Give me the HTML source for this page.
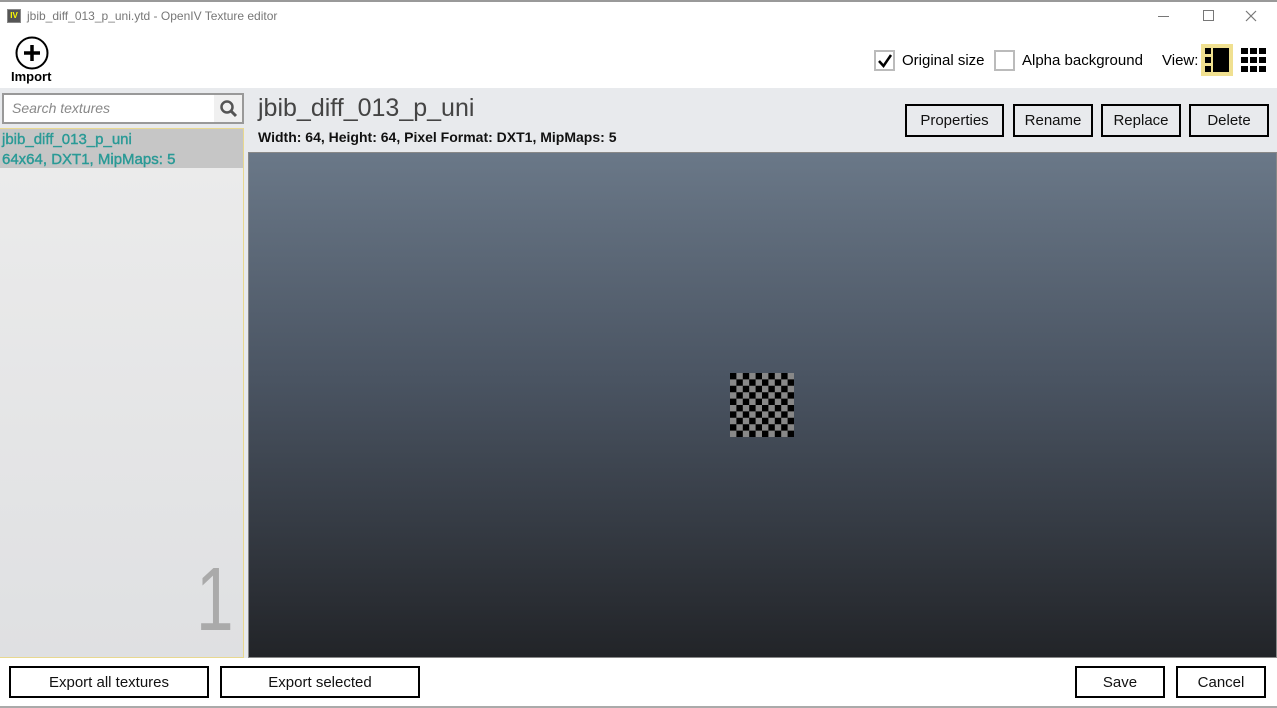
<!DOCTYPE html>
<html><head><style>
*{margin:0;padding:0;box-sizing:border-box}
body{width:1277px;height:708px;overflow:hidden;background:#fff;font-family:"Liberation Sans",sans-serif;position:relative;color:#000}
.a{position:absolute}
.btn{position:absolute;border:2px solid #000;background:transparent;font-size:15px;text-align:center;line-height:29px;color:#111}
</style></head><body>
<div class="a" style="left:0;top:0;width:1277px;height:2px;background:#999"></div>
<div class="a" style="left:7px;top:9px;width:14px;height:14px;background:#555;border:1px solid #888;color:#ff0;font-size:8px;font-weight:bold;line-height:12px;text-align:center">IV</div>
<div class="a" style="left:27px;top:9px;font-size:12px;color:#777">jbib_diff_013_p_uni.ytd - OpenIV Texture editor</div>
<div class="a" style="left:1158px;top:16px;width:11px;height:1px;background:#777"></div>
<div class="a" style="left:1203px;top:10px;width:11px;height:11px;border:1px solid #777"></div>
<svg class="a" style="left:1245px;top:10px" width="12" height="12"><path d="M1 1L11 11M11 1L1 11" stroke="#777" stroke-width="1.2"/></svg>
<svg class="a" style="left:14px;top:36px" width="36" height="34"><circle cx="18" cy="17" r="15.5" fill="none" stroke="#000" stroke-width="2"/><path d="M18 9V25M10 17H26" stroke="#000" stroke-width="3.5"/></svg>
<div class="a" style="left:11px;top:69px;font-size:13px;font-weight:bold">Import</div>
<div class="a" style="left:874px;top:50px;width:21px;height:21px;border:2px solid #bbb"></div>
<svg class="a" style="left:876px;top:52px" width="18" height="18"><path d="M3 9L7.5 14L15 3" fill="none" stroke="#000" stroke-width="2.5"/></svg>
<div class="a" style="left:902px;top:52px;font-size:15px">Original size</div>
<div class="a" style="left:994px;top:50px;width:21px;height:21px;border:2px solid #bbb"></div>
<div class="a" style="left:1022px;top:52px;font-size:15px">Alpha background</div>
<div class="a" style="left:1162px;top:52px;font-size:15px">View:</div>
<div class="a" style="left:1201px;top:44px;width:32px;height:32px;background:#f0e090"></div>
<div class="a" style="left:1205px;top:48px;width:6px;height:6px;background:#000"></div>
<div class="a" style="left:1205px;top:57px;width:6px;height:6px;background:#000"></div>
<div class="a" style="left:1205px;top:66px;width:6px;height:6px;background:#000"></div>
<div class="a" style="left:1213px;top:48px;width:16px;height:24px;background:#000"></div>
<svg class="a" style="left:1241px;top:48px" width="25" height="25"><g fill="#000"><rect x="0" y="0" width="7" height="6"/><rect x="9" y="0" width="7" height="6"/><rect x="18" y="0" width="7" height="6"/><rect x="0" y="9" width="7" height="6"/><rect x="9" y="9" width="7" height="6"/><rect x="18" y="9" width="7" height="6"/><rect x="0" y="18" width="7" height="6"/><rect x="9" y="18" width="7" height="6"/><rect x="18" y="18" width="7" height="6"/></g></svg>
<div class="a" style="left:0;top:88px;width:1277px;height:570px;background:#e8eaed"></div>
<div class="a" style="left:2px;top:93px;width:242px;height:31px;border:2px solid #999;background:#fff"></div>
<div class="a" style="left:214px;top:95px;width:28px;height:27px;background:#f0f0f0"></div>
<svg class="a" style="left:219px;top:99px" width="20" height="20"><circle cx="8" cy="8" r="5.5" fill="none" stroke="#555" stroke-width="2.5"/><path d="M12 12L17 17" stroke="#555" stroke-width="3"/></svg>
<div class="a" style="left:12px;top:100px;font-size:14px;font-style:italic;color:#888">Search textures</div>
<div class="a" style="left:0;top:128px;width:244px;height:530px;background:linear-gradient(#ececec,#dfe0e2);border-right:1px solid #e8d890;border-bottom:1px solid #e8d890"></div>
<div class="a" style="left:0;top:128px;width:243px;height:40px;background:#c6c6c6;border-top:1px solid #e8d890"></div>
<div class="a" style="left:2px;top:130px;font-size:15px;color:#2a9a96;line-height:20px;-webkit-text-stroke:0.4px #2a9a96">jbib_diff_013_p_uni<br>64x64, DXT1, MipMaps: 5</div>
<div class="a" style="left:196px;top:550px;font-size:90px;color:#aaa;line-height:100px;transform:scaleX(0.75);transform-origin:left">1</div>
<div class="a" style="left:258px;top:94px;font-size:25px;color:#444">jbib_diff_013_p_uni</div>
<div class="a" style="left:258px;top:129px;font-size:14px;font-weight:bold;color:#111">Width: 64, Height: 64, Pixel Format: DXT1, MipMaps: 5</div>
<div class="btn" style="left:905px;top:104px;width:99px;height:33px">Properties</div>
<div class="btn" style="left:1013px;top:104px;width:80px;height:33px">Rename</div>
<div class="btn" style="left:1101px;top:104px;width:80px;height:33px">Replace</div>
<div class="btn" style="left:1189px;top:104px;width:80px;height:33px">Delete</div>
<div class="a" style="left:248px;top:152px;width:1029px;height:506px;border:1px solid #888;background:linear-gradient(#6a7888,#4a5462 45%,#222428)"></div>
<svg class="a" style="left:730px;top:373px" width="64" height="64"><rect width="64" height="64" fill="#888"/>
<path fill="#000" d="M0 0h6.4v6.4H0zM12.8 0h6.4v6.4h-6.4zM25.6 0h6.4v6.4h-6.4zM38.4 0h6.4v6.4h-6.4zM51.2 0h6.4v6.4h-6.4zM6.4 6.4h6.4v6.4H6.4zM19.2 6.4h6.4v6.4h-6.4zM32 6.4h6.4v6.4H32zM44.8 6.4h6.4v6.4h-6.4zM57.6 6.4H64v6.4h-6.4zM0 12.8h6.4v6.4H0zM12.8 12.8h6.4v6.4h-6.4zM25.6 12.8h6.4v6.4h-6.4zM38.4 12.8h6.4v6.4h-6.4zM51.2 12.8h6.4v6.4h-6.4zM6.4 19.2h6.4v6.4H6.4zM19.2 19.2h6.4v6.4h-6.4zM32 19.2h6.4v6.4H32zM44.8 19.2h6.4v6.4h-6.4zM57.6 19.2H64v6.4h-6.4zM0 25.6h6.4V32H0zM12.8 25.6h6.4V32h-6.4zM25.6 25.6h6.4V32h-6.4zM38.4 25.6h6.4V32h-6.4zM51.2 25.6h6.4V32h-6.4zM6.4 32h6.4v6.4H6.4zM19.2 32h6.4v6.4h-6.4zM32 32h6.4v6.4H32zM44.8 32h6.4v6.4h-6.4zM57.6 32H64v6.4h-6.4zM0 38.4h6.4v6.4H0zM12.8 38.4h6.4v6.4h-6.4zM25.6 38.4h6.4v6.4h-6.4zM38.4 38.4h6.4v6.4h-6.4zM51.2 38.4h6.4v6.4h-6.4zM6.4 44.8h6.4v6.4H6.4zM19.2 44.8h6.4v6.4h-6.4zM32 44.8h6.4v6.4H32zM44.8 44.8h6.4v6.4h-6.4zM57.6 44.8H64v6.4h-6.4zM0 51.2h6.4v6.4H0zM12.8 51.2h6.4v6.4h-6.4zM25.6 51.2h6.4v6.4h-6.4zM38.4 51.2h6.4v6.4h-6.4zM51.2 51.2h6.4v6.4h-6.4zM6.4 57.6h6.4V64H6.4zM19.2 57.6h6.4V64h-6.4zM32 57.6h6.4V64H32zM44.8 57.6h6.4V64h-6.4zM57.6 57.6H64V64h-6.4z"/></svg>
<div class="btn" style="left:9px;top:666px;width:200px;height:32px">Export all textures</div>
<div class="btn" style="left:220px;top:666px;width:200px;height:32px">Export selected</div>
<div class="btn" style="left:1075px;top:666px;width:90px;height:32px">Save</div>
<div class="btn" style="left:1176px;top:666px;width:90px;height:32px">Cancel</div>
<div class="a" style="left:0;top:706px;width:1277px;height:2px;background:#aaa"></div>
</body></html>
